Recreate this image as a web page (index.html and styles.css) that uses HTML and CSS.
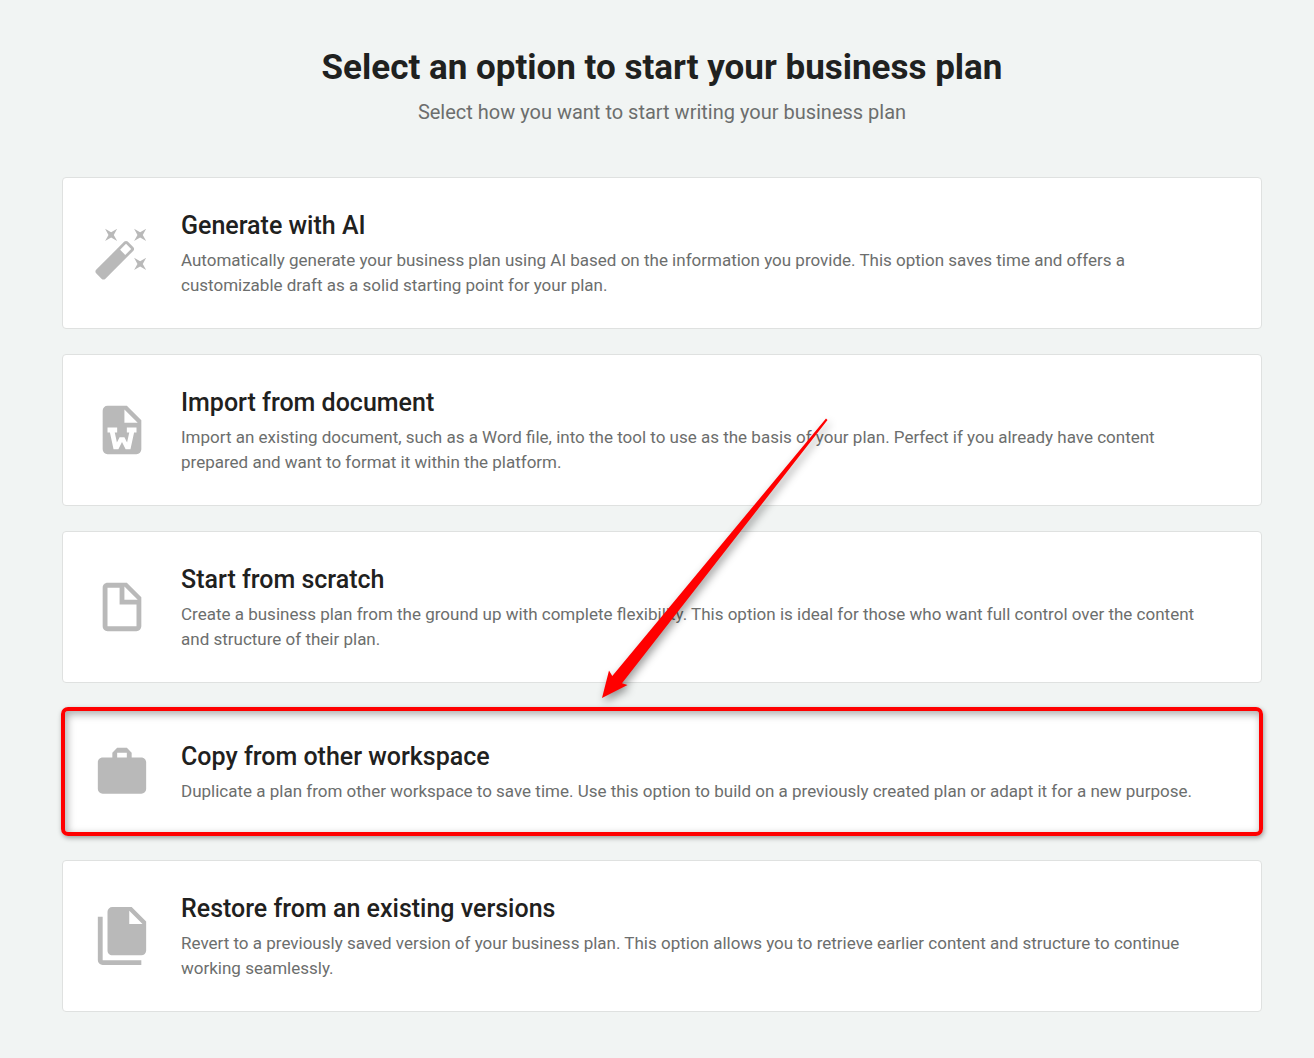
FILE: index.html
```html
<!DOCTYPE html>
<html lang="en">
<head>
    <meta charset="UTF-8" />
    <meta name="viewport" content="width=device-width, initial-scale=1.0" />
    <link rel="stylesheet" href="styles.css">
    <title>Start your business plan</title>
</head>
<body>
    <main class="page">
        <header class="intro">
            <h1>Select an option to start your business plan</h1>
            <p>Select how you want to start writing your business plan</p>
        </header>

        <div class="options">
            <button type="button" class="option">
                <svg class="icon" viewBox="0 0 24 24" aria-hidden="true"><path d="M7.5,5.6L5,7L6.4,4.5L5,2L7.5,3.4L10,2L8.6,4.5L10,7L7.5,5.6M19.5,15.4L22,14L20.6,16.5L22,19L19.5,17.6L17,19L18.4,16.5L17,14L19.5,15.4M22,2L20.6,4.5L22,7L19.5,5.6L17,7L18.4,4.5L17,2L19.5,3.4L22,2M13.34,12.78L15.78,10.34L13.66,8.22L11.22,10.66L13.34,12.78M14.37,7.29L16.71,9.63C17.1,10 17.1,10.65 16.71,11.04L5.04,22.71C4.65,23.1 4,23.1 3.63,22.71L1.29,20.37C0.9,20 0.9,19.35 1.29,18.96L12.96,7.29C13.35,6.9 14,6.9 14.37,7.29Z"/></svg>
                <span class="text">
                    <span class="title">Generate with AI</span>
                    <span class="description">Automatically generate your business plan using AI based on the information you provide. This option saves time and offers a customizable draft as a solid starting point for your plan.</span>
                </span>
            </button>

            <button type="button" class="option">
                <svg class="icon" viewBox="0 0 24 24" aria-hidden="true"><path d="M6,2H14L20,8V20A2,2 0 0,1 18,22H6A2,2 0 0,1 4,20V4A2,2 0 0,1 6,2M13,3.5V9H18.5L13,3.5M7,13L8.5,20H10.5L12,17L13.5,20H15.5L17,13H18V11H14V13H15L14.1,17.2L13,15V15H11V15L9.9,17.2L9,13H10V11H6V13H7Z"/></svg>
                <span class="text">
                    <span class="title">Import from document</span>
                    <span class="description">Import an existing document, such as a Word file, into the tool to use as the basis of your plan. Perfect if you already have content prepared and want to format it within the platform.</span>
                </span>
            </button>

            <button type="button" class="option">
                <svg class="icon" viewBox="0 0 24 24" aria-hidden="true"><path d="M13,9H18.5L13,3.5V9M6,2H14L20,8V20A2,2 0 0,1 18,22H6C4.89,22 4,21.1 4,20V4C4,2.89 4.89,2 6,2M11,4H6V20H11L18,20V11H11V4Z"/></svg>
                <span class="text">
                    <span class="title">Start from scratch</span>
                    <span class="description">Create a business plan from the ground up with complete flexibility. This option is ideal for those who want full control over the content and structure of their plan.</span>
                </span>
            </button>

            <button type="button" class="option highlighted">
                <svg class="icon" viewBox="0 0 24 24" aria-hidden="true"><path d="M14,6H10V4H14M20,6H16V4L14,2H10L8,4V6H4C2.89,6 2,6.89 2,8V19A2,2 0 0,0 4,21H20A2,2 0 0,0 22,19V8C22,6.89 21.1,6 20,6Z"/></svg>
                <span class="text">
                    <span class="title">Copy from other workspace</span>
                    <span class="description">Duplicate a plan from other workspace to save time. Use this option to build on a previously created plan or adapt it for a new purpose.</span>
                </span>
                <!-- arrow pointing at this option -->
                <svg class="arrow" viewBox="0 0 226 280" aria-hidden="true"><path d="M0,280L7,252.5L10.3,258L224,0.5L225.5,2L20,265.3L25.5,267Z"/></svg>
            </button>

            <button type="button" class="option">
                <svg class="icon" viewBox="0 0 24 24" aria-hidden="true"><path d="M15,7H20.5L15,1.5V7M8,0H16L22,6V18A2,2 0 0,1 20,20H8C6.89,20 6,19.1 6,18V2A2,2 0 0,1 8,0M4,4V22H20V24H4A2,2 0 0,1 2,22V4H4Z"/></svg>
                <span class="text">
                    <span class="title">Restore from an existing versions</span>
                    <span class="description">Revert to a previously saved version of your business plan. This option allows you to retrieve earlier content and structure to continue working seamlessly.</span>
                </span>
            </button>
        </div>
    </main>
</body>
</html>
```
FILE: styles.css
```css
* {
    box-sizing: border-box;
    margin: 0;
    padding: 0;
}
body {
    background-color: #f1f4f3;
    color: #1f2120;
    font-family: Roboto, sans-serif;
}
.page {
    padding: 47px 52px 44px 62px;
}
.intro {
    text-align: center;
    margin-bottom: 51px;
}
.intro h1 {
    font-size: 35px;
    line-height: 42px;
    font-weight: 700;
}
.intro p {
    margin-top: 9px;
    font-size: 20px;
    line-height: 28px;
    color: #6c6e6d;
}
.options {
    display: flex;
    flex-direction: column;
    gap: 25px;
}
.option {
    position: relative;
    display: flex;
    align-items: center;
    gap: 30px;
    width: 100%;
    padding: 30px 56px 30px 30px;
    border: 1px solid #dfe1e0;
    border-radius: 4px;
    background-color: white;
    color: inherit;
    font-family: inherit;
    text-align: left;
    cursor: pointer;
}
.icon {
    flex: none;
    width: 58px;
    height: 58px;
    overflow: visible;
    fill: #b9b9b9;
}
.title {
    display: block;
    margin-bottom: 4px;
    font-size: 25px;
    line-height: 36px;
    font-weight: 500;
}
.description {
    display: block;
    font-size: 17px;
    line-height: 25px;
    color: #6c6e6d;
}
.highlighted::before {
    content: "";
    position: absolute;
    inset: -2px;
    border: 4px solid #ff0000;
    border-radius: 7px;
    box-shadow: 1px 2px 5px rgba(0, 0, 0, 0.35), inset 2px 3px 8px rgba(0, 0, 0, 0.35);
}
.arrow {
    position: absolute;
    left: 45%;
    bottom: calc(100% + 11px);
    width: 226px;
    height: 280px;
    overflow: visible;
    fill: #ff0000;
    filter: drop-shadow(2px 4px 4px rgba(0, 0, 0, 0.4));
    pointer-events: none;
}
```
